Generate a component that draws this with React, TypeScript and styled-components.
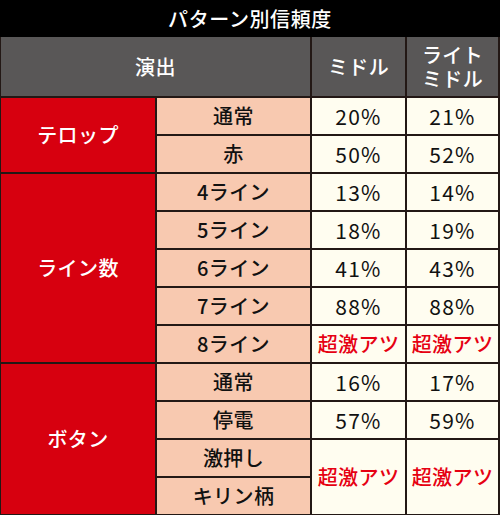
import React from 'react';
import styled, { createGlobalStyle } from 'styled-components';

const GlobalStyle = createGlobalStyle`
  html, body {
    margin: 0;
    padding: 0;
    background: #fff;
  }
  body {
    font-family: "Noto Sans CJK JP", "Noto Sans", sans-serif;
  }
`;

type Tone = 'head' | 'red' | 'peach' | 'cream';

const bg: Record<Tone, string> = {
  head: '#595757',
  red: '#d7000f',
  peach: '#f8c9b0',
  cream: '#fffdf0',
};

const fg: Record<Tone, string> = {
  head: '#ffffff',
  red: '#ffffff',
  peach: '#111111',
  cream: '#111111',
};

const Wrapper = styled.div`
  width: 500px;
  height: 515px;
  display: flex;
  flex-direction: column;
  background: #231815;
`;

const Title = styled.div`
  height: 37px;
  background: #000;
  color: #fff;
  font-size: 20px;
  font-weight: 500;
  display: flex;
  align-items: center;
  justify-content: center;
  letter-spacing: 0.6px;
`;

const Grid = styled.div`
  display: grid;
  grid-template-columns: 154px 153px 93px 91px;
  grid-template-rows: 59px repeat(11, 36px);
  gap: 2px;
  padding: 0 2px 1px 1px;
  background: #231815;
`;

const Cell = styled.div<{ $tone: Tone; $rows?: number; $cols?: number; $hot?: boolean; $num?: boolean }>`
  background: ${p => bg[p.$tone]};
  color: ${p => (p.$hot ? '#e60012' : fg[p.$tone])};
  grid-row: span ${p => p.$rows ?? 1};
  grid-column: span ${p => p.$cols ?? 1};
  display: flex;
  flex-direction: column;
  align-items: center;
  justify-content: center;
  text-align: center;
  font-size: ${p => (p.$num ? '21px' : '20px')};
  font-weight: ${p => (p.$num ? 400 : 500)};
  line-height: 24px;
  letter-spacing: ${p => (p.$num ? '1.2px' : '0.4px')};
  white-space: nowrap;
`;

const Line = styled.span`
  display: block;
  height: 24px;
`;

const HOT = '超激アツ';

type Row = { name: string; a: string; b: string };

const groups: { label: string; rows: Row[] }[] = [
  {
    label: 'テロップ',
    rows: [
      { name: '通常', a: '20%', b: '21%' },
      { name: '赤', a: '50%', b: '52%' },
    ],
  },
  {
    label: 'ライン数',
    rows: [
      { name: '4ライン', a: '13%', b: '14%' },
      { name: '5ライン', a: '18%', b: '19%' },
      { name: '6ライン', a: '41%', b: '43%' },
      { name: '7ライン', a: '88%', b: '88%' },
      { name: '8ライン', a: HOT, b: HOT },
    ],
  },
];

const ValueCell: React.FC<{ value: string; rows?: number }> = ({ value, rows }) => (
  <Cell $tone="cream" $rows={rows} $hot={value === HOT} $num={value !== HOT}>
    {value}
  </Cell>
);

const App: React.FC = () => {
  return (
    <>
      <GlobalStyle />
      <Wrapper>
        <Title>パターン別信頼度</Title>
        <Grid>
          <Cell $tone="head" $cols={2}>演出</Cell>
          <Cell $tone="head">ミドル</Cell>
          <Cell $tone="head">
            <Line>ライト</Line>
            <Line>ミドル</Line>
          </Cell>

          {groups.map(g => (
            <React.Fragment key={g.label}>
              <Cell $tone="red" $rows={g.rows.length}>{g.label}</Cell>
              {g.rows.map(r => (
                <React.Fragment key={r.name}>
                  <Cell $tone="peach">{r.name}</Cell>
                  <ValueCell value={r.a} />
                  <ValueCell value={r.b} />
                </React.Fragment>
              ))}
            </React.Fragment>
          ))}

          {/* ボタン */}
          <Cell $tone="red" $rows={4}>ボタン</Cell>
          <Cell $tone="peach">通常</Cell>
          <ValueCell value="16%" />
          <ValueCell value="17%" />
          <Cell $tone="peach">停電</Cell>
          <ValueCell value="57%" />
          <ValueCell value="59%" />
          <Cell $tone="peach">激押し</Cell>
          <ValueCell value={HOT} rows={2} />
          <ValueCell value={HOT} rows={2} />
          <Cell $tone="peach">キリン柄</Cell>
        </Grid>
      </Wrapper>
    </>
  );
};

export default App;
